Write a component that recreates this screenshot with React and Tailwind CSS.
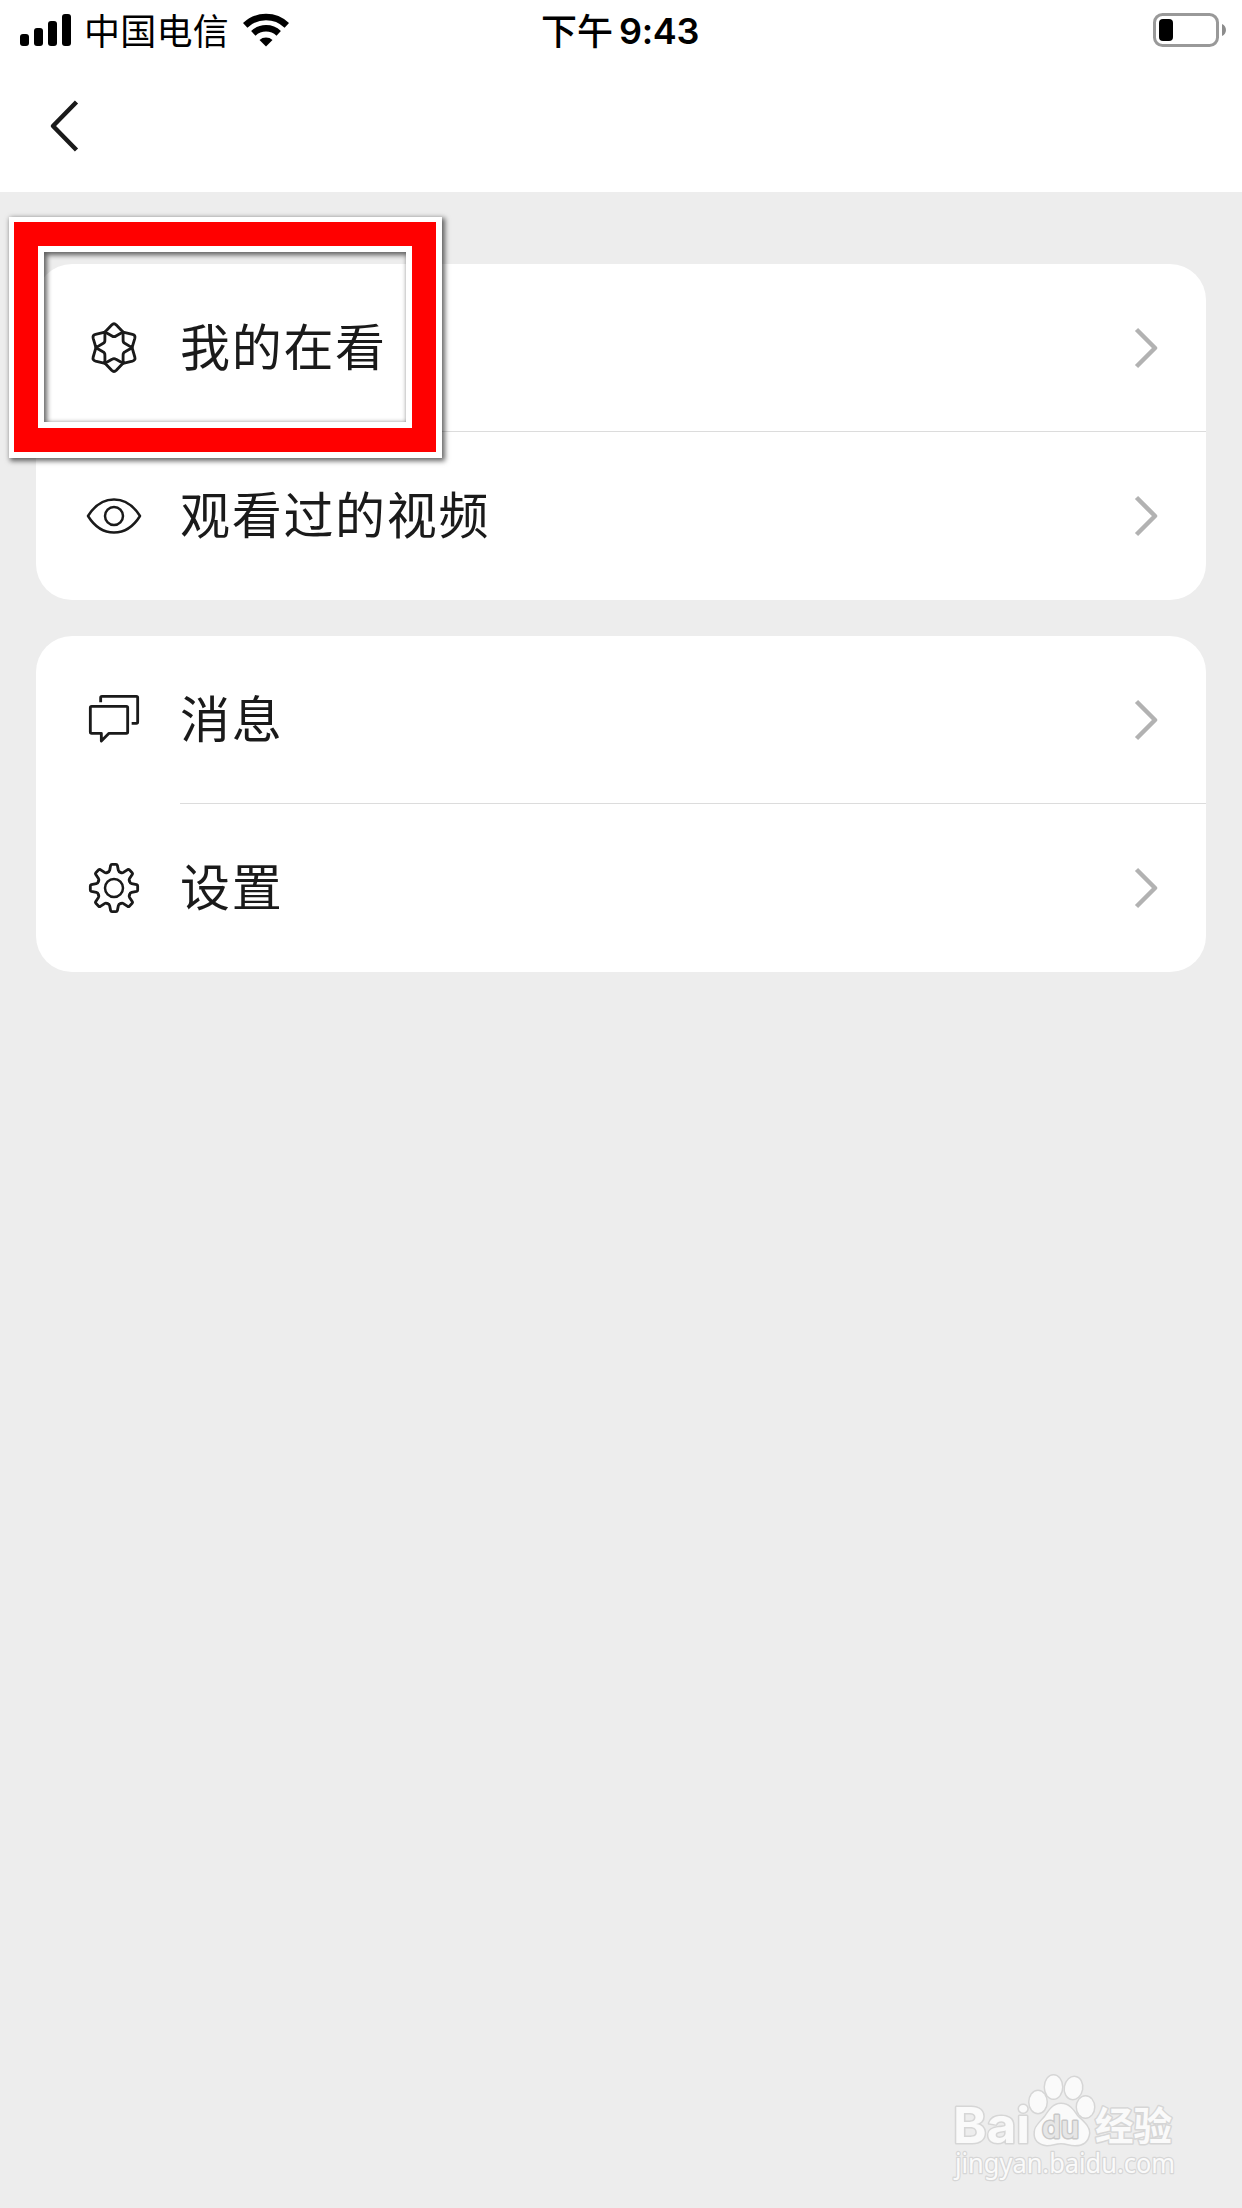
const SignalIcon = () => (
  <svg width="51" height="34" viewBox="0 0 51 34" fill="#000">
    <rect x="0" y="21" width="9" height="12" rx="3" />
    <rect x="14" y="15" width="9" height="18" rx="3" />
    <rect x="28" y="8" width="9" height="25" rx="3" />
    <rect x="42" y="1" width="9" height="32" rx="3" />
  </svg>
);

const WifiIcon = () => (
  <svg width="46" height="34" viewBox="0 0 46 34" fill="none" stroke="#000">
    <path d="M2.2 12.4A30 30 0 0 1 43.8 12.4" strokeWidth="6.4" />
    <path d="M10.3 20.3A18.5 18.5 0 0 1 35.7 20.3" strokeWidth="6.4" />
    <path d="M16.5 27A9.8 9.8 0 0 1 29.5 27L23 33.4Z" fill="#000" stroke="none" />
  </svg>
);

const BatteryIcon = () => (
  <svg width="74" height="34" viewBox="0 0 74 34">
    <rect x="1.5" y="1.5" width="63" height="31" rx="8" fill="none" stroke="#999" strokeWidth="3" />
    <rect x="6" y="6" width="14" height="22" rx="4" fill="#000" />
    <path d="M69 11C74.300 13 74.300 21 69 23Z" fill="#8c8c8c" />
  </svg>
);

const RowIcon = ({ children }) => (
  <svg
    className="w-[60px] h-[60px] shrink-0"
    viewBox="-90 -90 180 180"
    fill="none"
    stroke="#1a1a1a"
    strokeWidth="8.500"
    strokeLinejoin="round"
    strokeLinecap="round"
  >
    {children}
  </svg>
);

const WowIcon = () => (
  <RowIcon>
    {[0, 60, 120, 180, 240, 300].map((angle) => (
      <path
        key={angle}
        transform={`translate(0 -1) rotate(${angle})`}
        d="M-27 -47L-7 -68Q0 -75 7 -68L27 -47L6 -35Q0 -31 -6 -35Z"
      />
    ))}
  </RowIcon>
);

const EyeIcon = () => (
  <RowIcon>
    <path d="M-78 0C-37 -66 37 -66 78 0C37 66 -37 66 -78 0Z" strokeWidth="7.500" />
    <circle r="27" strokeWidth="7.500" />
  </RowIcon>
);

const MessageIcon = () => (
  <RowIcon>
    <path d="M-67 -41H37Q41 -41 41 -37V36Q41 40 37 40H-15L-38 63V40H-67Q-71 40 -71 36V-37Q-71 -41 -67 -41Z" />
    <path d="M-40 -53V-67Q-40 -71 -36 -71H67Q71 -71 71 -67V6Q71 10 67 10H53" strokeLinecap="butt" />
  </RowIcon>
);

const GearIcon = () => (
  <RowIcon>
    {[0, 45, 90, 135, 180, 225, 270, 315].map((angle) => (
      <path
        key={angle}
        transform={`rotate(${angle})`}
        d="M-19.500 -47Q-14 -48 -13 -53L-10 -68Q-9 -71 -6 -71H6Q9 -71 10 -68L13 -53Q14 -48 19.500 -47"
      />
    ))}
    <circle r="27" strokeWidth="7.500" />
  </RowIcon>
);

const Chevron = () => (
  <svg width="24" height="42" viewBox="0 0 24 42" fill="none" stroke="#b2b2b2" strokeWidth="4.500">
    <path d="M2.500 2.500L21 21L2.500 39.500" strokeLinejoin="round" />
  </svg>
);

const MenuRow = ({ icon: Icon, label, divider }) => (
  <div className="flex h-[168px] pl-12">
    <div className="flex w-24 items-center">
      <Icon />
    </div>
    <div
      className={`flex flex-1 items-center justify-between pt-px pr-12 border-b ${
        divider ? 'border-[#dcdcdc]' : 'border-transparent'
      }`}
    >
      <span className="pb-2 text-[50px] leading-[60px] tracking-[1.700px] text-[#1a1a1a]">{label}</span>
      <Chevron />
    </div>
  </div>
);

const groups = [
  [
    { icon: WowIcon, label: '我的在看' },
    { icon: EyeIcon, label: '观看过的视频' },
  ],
  [
    { icon: MessageIcon, label: '消息' },
    { icon: GearIcon, label: '设置' },
  ],
];

const Highlight = () => (
  <div className="absolute left-[9px] top-[217px] w-[433px] h-[241px] border-[6px] border-l-[5px] border-t-[5px] border-white shadow-[2px_2px_5px_1px_rgba(0,0,0,0.6)]">
    <div className="h-full border-[24px] border-[#ff0000]">
      <div className="h-full border-[6px] border-white">
        <div className="h-full shadow-[inset_2px_2px_5px_1px_rgba(0,0,0,0.6)]" />
      </div>
    </div>
  </div>
);

const Watermark = () => (
  <svg
    className="absolute right-[42px] bottom-[8px]"
    width="270"
    height="150"
    viewBox="0 0 270 150"
    fill="#fafafa"
    stroke="#d6d6d6"
    strokeWidth="3"
    strokeLinejoin="round"
    paintOrder="stroke"
  >
    <text x="23" y="93" fontFamily="Inter, sans-serif" fontWeight="700" fontSize="49" textLength="77" lengthAdjust="spacingAndGlyphs">
      Bai
    </text>
    <ellipse cx="108" cy="52" rx="8.500" ry="11" />
    <ellipse cx="123.500" cy="37" rx="8.500" ry="11.500" />
    <ellipse cx="143.500" cy="38" rx="8.500" ry="11" transform="rotate(10 143.500 38)" />
    <ellipse cx="155.500" cy="57" rx="8.500" ry="10.500" />
    <path d="M131 54C139 54 143 60 147 66C152 71 159 76 159 83C158 92 152 95 145 95C140 95 136 93 131 93C126 93 122 95 117 95C109 94 104 90 105 82C105 76 111 72 115 67C119 61 123 54 131 54Z" />
    <text x="112" y="88" fill="#e6e6e6" stroke="#c8c8c8" fontFamily="Inter, sans-serif" fontWeight="600" fontSize="31" textLength="37" lengthAdjust="spacingAndGlyphs">
      du
    </text>
    <text x="165" y="90" fontFamily="'Noto Sans CJK SC', sans-serif" fontWeight="700" fontSize="39" textLength="77" lengthAdjust="spacingAndGlyphs">
      经验
    </text>
    <text x="25" y="123" strokeWidth="2.500" fontFamily="'Noto Sans', sans-serif" fontSize="28" textLength="220" lengthAdjust="spacingAndGlyphs">
      jingyan.baidu.com
    </text>
  </svg>
);

const App = () => {
  return (
    <div className="relative w-[1242px] h-[2208px] overflow-hidden bg-[#ededed] font-['Noto_Sans_CJK_SC',sans-serif]">
      {/* Header */}
      <header className="h-48 bg-white">
        <div className="grid grid-cols-3 items-center h-[60px] pl-5 pr-[15px] text-black">
          <div className="flex items-center">
            <SignalIcon />
            <span className="ml-[13px] mr-[14px] pb-0.5 text-[36px] leading-[58px] tracking-[0.25px]">中国电信</span>
            <WifiIcon />
          </div>
          <div className="flex items-center justify-center gap-[6px] pr-[7px] text-[36px] leading-[58px]">
            <span className="pb-0.5 font-medium">下午</span>
            <span className="pt-0.5 font-['Inter',sans-serif] font-semibold tracking-[-0.3px]">9:43</span>
          </div>
          <div className="flex justify-end">
            <BatteryIcon />
          </div>
        </div>
        <button className="flex items-center h-[132px] pl-12">
          <svg width="34" height="54" viewBox="0 0 34 54" fill="none" stroke="#1a1a1a" strokeWidth="4.500">
            <path d="M28.500 3L5 27L28.500 51" strokeLinejoin="round" />
          </svg>
        </button>
      </header>

      {/* Menu */}
      <main className="flex flex-col gap-9 px-9 pt-[72px]">
        {groups.map((rows, i) => (
          <section key={i} className="rounded-[36px] bg-white overflow-hidden">
            {rows.map((row, j) => (
              <MenuRow key={row.label} {...row} divider={j < rows.length - 1} />
            ))}
          </section>
        ))}
      </main>

      <Highlight />
      <Watermark />
    </div>
  );
};

export default App;
